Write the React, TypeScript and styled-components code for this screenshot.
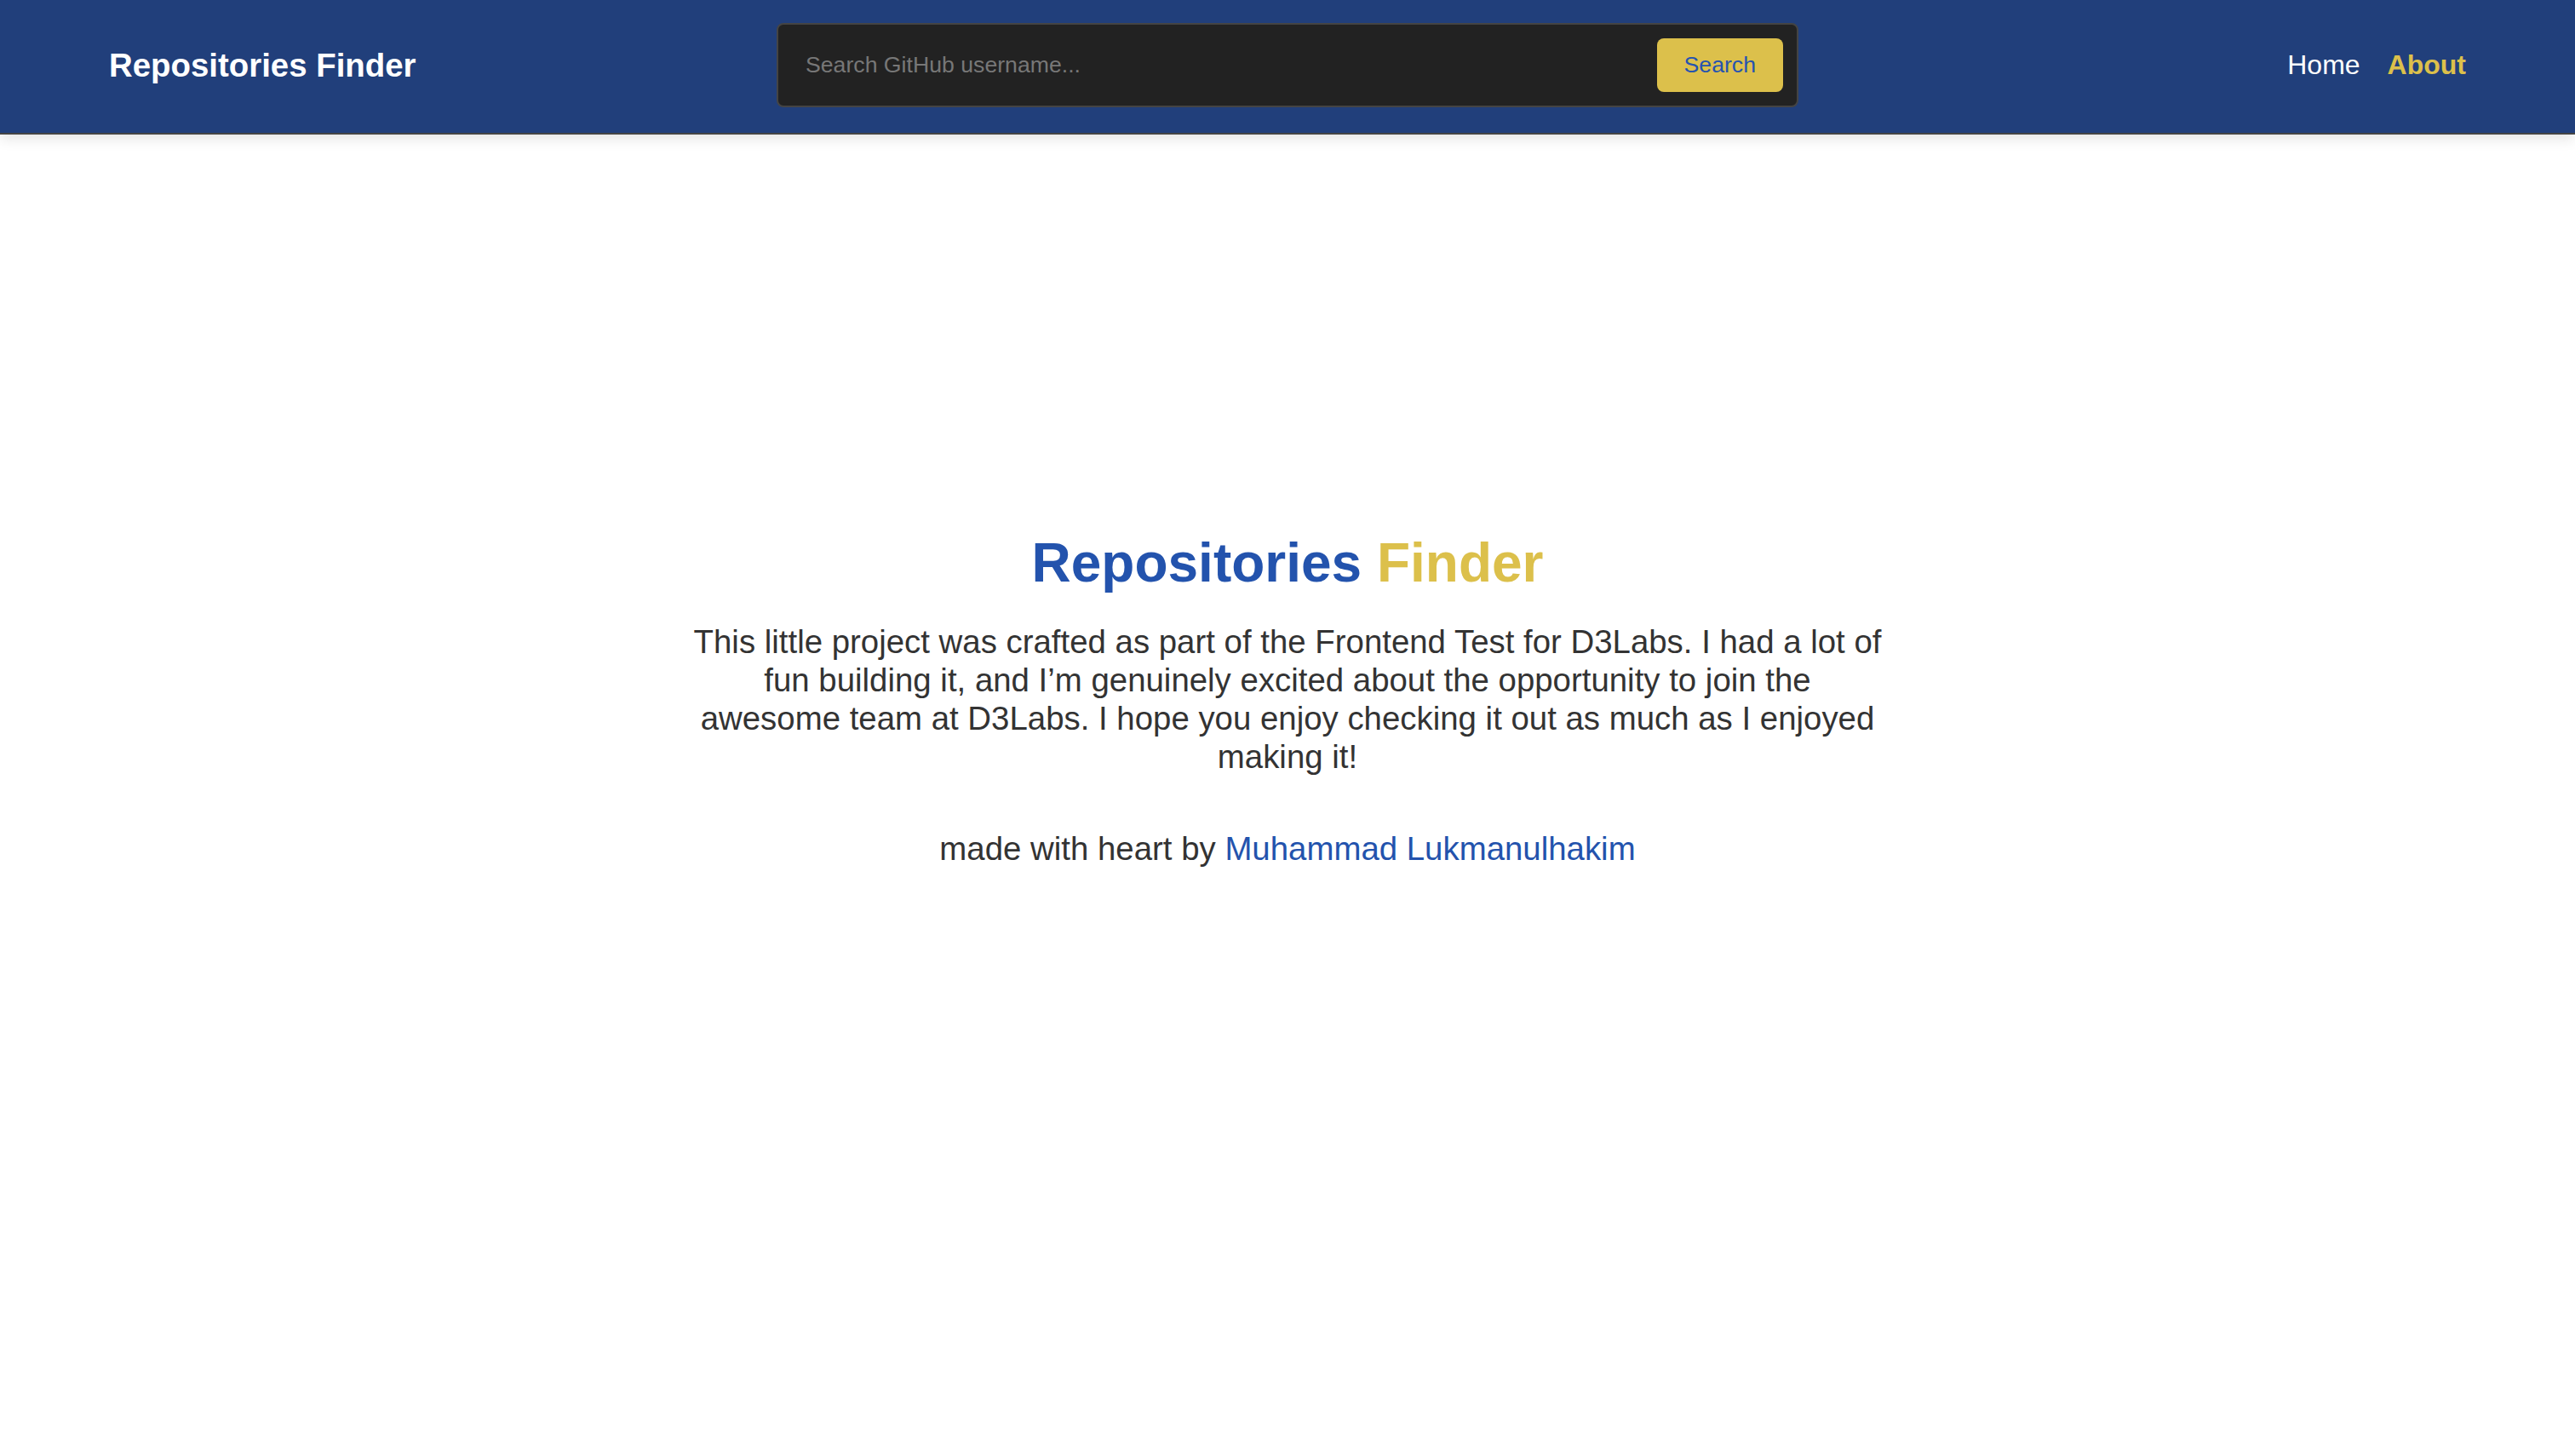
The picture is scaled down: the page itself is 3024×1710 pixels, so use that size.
import React from "react";
import styled, { createGlobalStyle } from "styled-components";

const GlobalStyle = createGlobalStyle`
  html, body {
    margin: 0;
    padding: 0;
    background: #ffffff;
    font-family: "Liberation Sans", Arial, Helvetica, sans-serif;
  }
  * { box-sizing: border-box; }
`;

const Header = styled.header`
  height: 158px;
  background: #213f7b;
  border-bottom: 2px solid #444444;
  box-shadow: 0 4px 16px rgba(0, 0, 0, 0.12);
  padding: 0 128px 3px;
  display: grid;
  grid-template-columns: 1fr auto 1fr;
  align-items: center;
  position: relative;
  z-index: 1;
`;

const Logo = styled.div`
  color: #ffffff;
  font-weight: 700;
  font-size: 38.4px;
  justify-self: start;
`;

const SearchForm = styled.form`
  width: 1200px;
  display: flex;
  align-items: center;
  background: #222222;
  border: 2px solid #444444;
  border-radius: 8px;
  padding: 16px;
  gap: 16px;
`;

const SearchInput = styled.input`
  flex: 1;
  min-width: 0;
  background: transparent;
  border: none;
  outline: none;
  color: #ffffff;
  font-family: "Liberation Sans", Arial, sans-serif;
  font-size: 26.67px;
  padding: 0 0 0 16px;
  &::placeholder {
    color: #777777;
  }
`;

const SearchButton = styled.button`
  background: #dcc04b;
  color: #2553b0;
  border: none;
  border-radius: 8px;
  padding: 16px 32px;
  font-family: "Liberation Sans", Arial, sans-serif;
  font-size: 26.67px;
  cursor: pointer;
`;

const Nav = styled.nav`
  justify-self: end;
  display: flex;
  align-items: center;
  gap: 32px;
`;

const NavLink = styled.a<{ $active?: boolean }>`
  font-size: 32px;
  text-decoration: none;
  color: ${(p) => (p.$active ? "#dcc04b" : "#ffffff")};
  font-weight: ${(p) => (p.$active ? 700 : 400)};
`;

const Main = styled.main`
  padding-top: 466px;
  display: flex;
  flex-direction: column;
  align-items: center;
  text-align: center;
`;

const Title = styled.h1`
  margin: 0;
  font-size: 64px;
  font-weight: 700;
  color: #2353ad;
`;

const Accent = styled.span`
  color: #dcc04b;
`;

const Description = styled.p`
  margin: 33px 0 0;
  max-width: 1400px;
  font-size: 38.4px;
  line-height: 45px;
  color: #333333;
`;

const Credit = styled.p`
  margin: 63px 0 0;
  font-size: 38.4px;
  line-height: 45px;
  color: #333333;
`;

const AuthorLink = styled.a`
  color: #2353ad;
  text-decoration: none;
`;

export default function App() {
  return (
    <>
      <GlobalStyle />
      <Header>
        <Logo>Repositories Finder</Logo>
        <SearchForm onSubmit={(e) => e.preventDefault()}>
          <SearchInput placeholder="Search GitHub username..." />
          <SearchButton type="submit">Search</SearchButton>
        </SearchForm>
        <Nav>
          <NavLink href="#">Home</NavLink>
          <NavLink href="#" $active>
            About
          </NavLink>
        </Nav>
      </Header>
      <Main>
        <Title>
          Repositories <Accent>Finder</Accent>
        </Title>
        <Description>
          This little project was crafted as part of the Frontend Test for
          D3Labs. I had a lot of fun building it, and I’m genuinely excited
          about the opportunity to join the awesome team at D3Labs. I hope you
          enjoy checking it out as much as I enjoyed making it!
        </Description>
        <Credit>
          made with heart by{" "}
          <AuthorLink href="#">Muhammad Lukmanulhakim</AuthorLink>
        </Credit>
      </Main>
    </>
  );
}
